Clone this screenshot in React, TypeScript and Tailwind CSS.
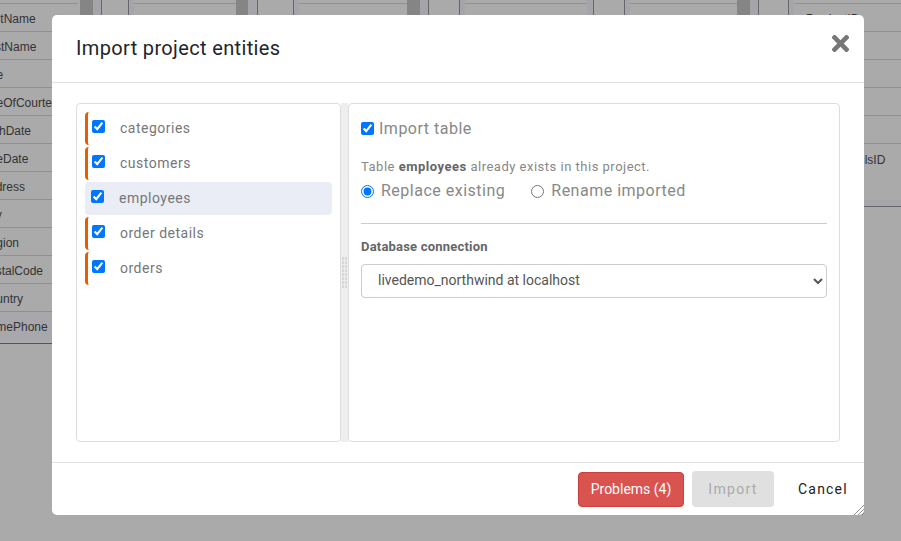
import { FaTimes } from 'react-icons/fa';

const leftFields = ['LastName', 'FirstName', 'Title', 'TitleOfCourtesy', 'BirthDate', 'HireDate', 'Address', 'City', 'Region', 'PostalCode', 'Country', 'HomePhone'];
const rightFields = ['ProductID', 'OrderID', 'UnitPrice', 'Quantity', 'SupplierID', 'OrderDetailsID', ''];

// strips of the diagram that show above the modal
const topPieces = [
  'left-[80px] w-[13px] bg-[#858585]',
  'left-[93px] w-[8px] bg-[#a5a5a9]',
  'left-[101px] w-px bg-[#666]',
  'left-[128px] w-px bg-[#666]',
  'left-[129px] w-[5px] bg-[#a5a5a9]',
  'left-[236px] w-[12px] bg-[#858585]',
  'left-[248px] w-[9px] bg-[#a5a5a9]',
  'left-[257px] w-px bg-[#666]',
  'left-[293px] w-px bg-[#666]',
  'left-[294px] w-[5px] bg-[#a5a5a9]',
  'left-[407px] w-[13px] bg-[#858585]',
  'left-[420px] w-[8px] bg-[#a5a5a9]',
  'left-[428px] w-px bg-[#666]',
  'left-[459px] w-px bg-[#666]',
  'left-[460px] w-[5px] bg-[#a5a5a9]',
  'left-[587px] w-[6px] bg-[#a5a5a9]',
  'left-[593px] w-px bg-[#666]',
  'left-[624px] w-px bg-[#666]',
  'left-[625px] w-[5px] bg-[#a5a5a9]',
  'left-[737px] w-[13px] bg-[#858585]',
  'left-[750px] w-[8px] bg-[#a5a5a9]',
  'left-[758px] w-px bg-[#666]',
  'left-[788px] w-px bg-[#666]',
  'left-[789px] w-[5px] bg-[#a5a5a9]',
];

const topTables = [
  { cls: 'left-[134px] w-[102px]', name: '' },
  { cls: 'left-[299px] w-[108px]', name: 'Id' },
  { cls: 'left-[465px] w-[122px]', name: 'CustomerID' },
  { cls: 'left-[630px] w-[107px]', name: 'EmployeeID' },
];

const entities = [
  { name: 'categories', warn: true },
  { name: 'customers', warn: true },
  { name: 'employees', warn: false },
  { name: 'order details', warn: true },
  { name: 'orders', warn: true },
];

function Diagram() {
  return (
    <>
      {topPieces.map((cls) => (
        <div key={cls} className={`absolute top-0 h-[16px] ${cls}`} />
      ))}
      {topTables.map((t) => (
        <div key={t.cls} className={`absolute top-[3px] h-[28px] border-t border-[#909090] pl-[13px] pt-[9px] text-[12px] leading-[14px] text-[#333] ${t.cls}`}>
          {t.name}
        </div>
      ))}
      <div className="absolute left-[-19px] top-[3px] w-[97px] border-t border-b border-t-[#909090] border-b-[#555] pb-[3px] text-[#333]">
        {leftFields.map((f, i) => (
          <div key={f} className={`flex h-[28px] items-center text-[12px] ${i < 11 ? 'border-b border-[#909090] pt-[3px]' : 'bg-[#a8a8ac] pt-[2px]'}`}>
            {f}
          </div>
        ))}
      </div>
      <div className="absolute left-[795px] top-[3px] w-[130px] border-t border-b border-t-[#909090] border-b-[#666] text-[#333]">
        {rightFields.map((f, i) => (
          <div key={i} className={`flex h-[28px] items-center pl-[11px] pt-[3px] text-[12px] ${i < 5 ? 'border-b border-[#909090]' : ''}`}>
            {f}
          </div>
        ))}
        <div className="h-[6px] bg-[#a6a6aa]" />
      </div>
    </>
  );
}

function EntityRow({ name, warn }: { name: string; warn: boolean }) {
  return (
    <div
      className={
        warn
          ? 'mb-[2px] flex h-[33px] items-start rounded-l-[4px] border-l-[3px] border-[#e65c00] pl-[4px]'
          : 'mb-[2px] flex h-[33px] items-start rounded-[4px] bg-[#eaedf5] pl-[6px]'
      }
    >
      <input type="checkbox" defaultChecked className="m-0 mt-[8px] h-[13px] w-[13px]" />
      <span className="ml-[15px] mt-[7px] text-[14px] leading-[18px] tracking-[0.5px] text-[#777]">{name}</span>
    </div>
  );
}

export default function App() {
  return (
    <div className="relative h-[541px] w-[901px] overflow-hidden bg-[#aaaaaa] font-['Liberation_Sans',sans-serif]">
      <Diagram />

      <div className="absolute left-[52px] top-[15px] flex h-[500px] w-[812px] flex-col rounded-[5px] bg-white font-['Roboto',sans-serif]">
        <div className="flex h-[68px] shrink-0 items-center justify-between border-b border-[#e2e2e2] pl-[24px] pr-[14px]">
          <h1 className="mb-[2px] text-[20px] tracking-[0.35px] text-[#212529]">Import project entities</h1>
          <FaTimes className="mb-[11px] h-[25px] w-[19px] text-[#777]" />
        </div>

        <div className="flex min-h-0 flex-1 px-[24px] pb-[20px] pt-[20px]">
          <div className="w-[265px] rounded-[4px] border border-[#dddddd] pl-[8px] pr-[8px] pt-[8px]">
            {entities.map((e) => (
              <EntityRow key={e.name} name={e.name} warn={e.warn} />
            ))}
          </div>

          <div className="flex w-[7px] items-center justify-center bg-[#eeeeee]">
            <div className="grid grid-cols-2 gap-[1px]">
              {Array.from({ length: 16 }).map((_, i) => (
                <span key={i} className="h-[3px] w-[2px] bg-[#d8d8d8]" />
              ))}
            </div>
          </div>

          <div className="flex-1 rounded-[4px] border border-[#dddddd] pl-[12px] pr-[12px] pt-[16px]">
            <label className="flex h-[18px] items-center">
              <input type="checkbox" defaultChecked className="m-0 mb-[2px] h-[13px] w-[13px]" />
              <span className="ml-[5px] text-[16px] tracking-[0.5px] text-[#888]">Import table</span>
            </label>

            <p className="mt-[21px] text-[13px] leading-[16px] tracking-[0.5px] text-[#888]">
              Table <b className="font-bold text-[#666]">employees</b> already exists in this project.
            </p>

            <div className="mt-[5px] flex h-[22px] items-center text-[16px] tracking-[0.5px] text-[#888]">
              <input type="radio" name="mode" defaultChecked className="m-0 h-[13px] w-[13px]" />
              <span className="ml-[7px]">Replace existing</span>
              <input type="radio" name="mode" className="m-0 ml-[26px] h-[13px] w-[13px]" />
              <span className="ml-[7px]">Rename imported</span>
            </div>

            <div className="mt-[21px] border-t border-[#cccccc]" />

            <div className="mt-[15px] text-[13px] font-bold leading-[16px] tracking-[0.2px] text-[#666]">Database connection</div>

            <select className="mt-[9px] h-[34px] w-full rounded-[4px] border border-[#cccccc] bg-white pb-[2px] pl-[12px] text-[14px] text-[#555]">
              <option>livedemo_northwind at localhost</option>
            </select>
          </div>
        </div>

        <div className="relative flex h-[53px] shrink-0 items-center border-t border-[#e2e2e2] pl-[526px]">
          <button className="h-[35px] w-[106px] rounded-[4px] border border-[#c9403c] bg-[#d9534f] text-[14px] text-white">Problems (4)</button>
          <button className="ml-[8px] h-[36px] w-[82px] rounded-[4px] bg-[#e0e0e0] text-[14px] tracking-[1.3px] text-[#aaaaaa]">Import</button>
          <button className="ml-[24px] text-[14px] tracking-[1.2px] text-[#222]">Cancel</button>
          <svg className="absolute bottom-0 right-0 h-[10px] w-[10px]" viewBox="0 0 10 10">
            <path d="M0 10L10 0M4 10L10 4M8 10L10 8" stroke="#777" strokeWidth="0.8" fill="none" />
          </svg>
        </div>
      </div>
    </div>
  );
}
